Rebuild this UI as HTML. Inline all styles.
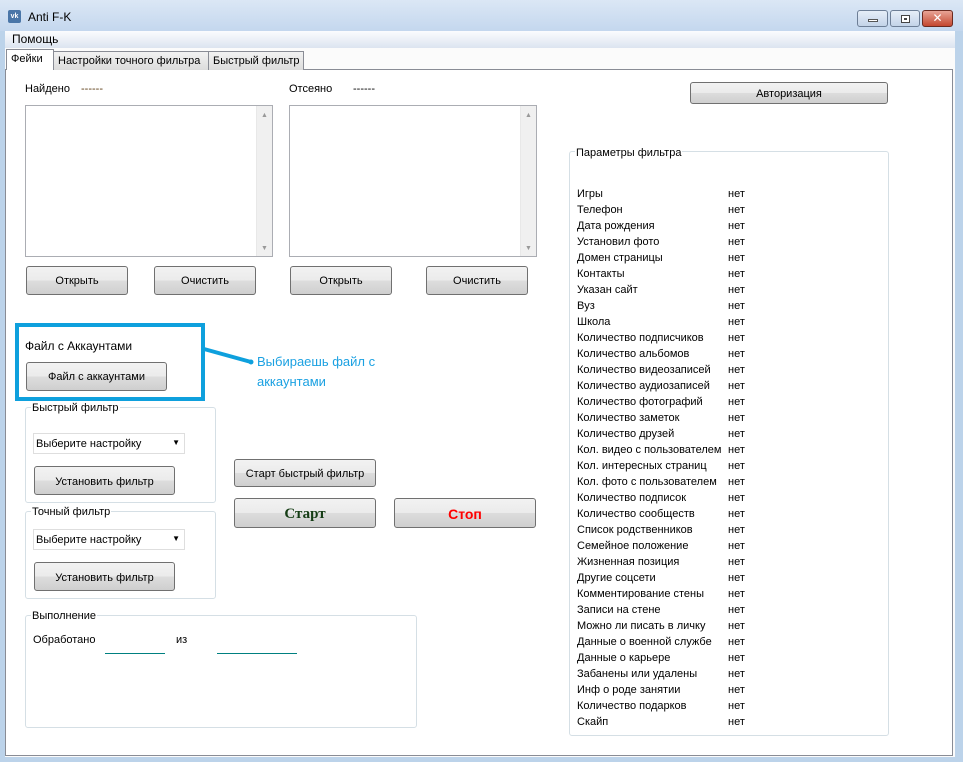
<!DOCTYPE html>
<html><head><meta charset="utf-8">
<style>
*{margin:0;padding:0;box-sizing:border-box}
body{width:963px;height:762px;overflow:hidden;background:#bcd3ea;font-family:"Liberation Sans","DejaVu Sans",sans-serif;font-size:11px;color:#000;position:relative}
.a{position:absolute;white-space:nowrap}
.title{left:0;top:0;width:963px;height:31px;background:linear-gradient(#dbe7f5,#c4d7ee)}
.client{left:5px;top:31px;width:950px;height:726px;background:#fbfbfb}
.menu{left:5px;top:31px;width:950px;height:17px;background:linear-gradient(#fbfcfe,#dce4f0)}
.page{left:5px;top:69px;width:948px;height:687px;background:#fff;border:1px solid #898c95}
.tab{top:51px;height:19px;border:1px solid #898c95;border-bottom:none;background:linear-gradient(#f2f2f2,#dcdcdc);padding:3px 4px 0;font-size:11px}
.btn{border:1px solid #707070;border-radius:3px;background:linear-gradient(#f2f2f2 0,#ebebeb 50%,#dddddd 50%,#cfcfcf 100%);text-align:center;font-size:11px}
.lb{border:1px solid #abadb3;background:#fff}
.sb{position:absolute;right:0;top:0;width:16px;height:100%;background:#f0f0f0;border-left:1px solid #e8e8e8}
.grp{border:1px solid #d5dfe5;border-radius:3px}
.gl{background:#fff;padding:0 1px}
.sel{border:1px solid #dedede;background:#fff;height:21px;padding:4px 2px;font-size:11px}
.wb{top:10px;height:17px;border:1px solid #6d7e96;border-radius:3px;background:linear-gradient(#e6eef8,#c3d3e8)}
.t{top:1px;position:relative}
</style></head><body>
<div class="a title"></div>
<div class="a" style="left:8px;top:10px;width:13px;height:13px;background:#4a76a8;border-radius:2px;color:#fff;font-size:7px;font-weight:bold;text-align:center;line-height:13px">vk</div>
<div class="a" style="left:28px;top:10px;font-size:12px">Anti F-K</div>
<div class="a wb" style="left:857px;width:31px"><div style="position:absolute;left:10px;top:8px;width:10px;height:3px;background:#fff;border:1px solid #555"></div></div>
<div class="a wb" style="left:890px;width:30px"><div style="position:absolute;left:10px;top:4px;width:9px;height:8px;border:1px solid #444;background:#fff"><div style="margin:2px;height:2px;background:#444"></div></div></div>
<div class="a wb" style="left:922px;width:31px;background:linear-gradient(#e8a496,#c4472f);border-color:#6b2a20;color:#fff;font-weight:bold;text-align:center;font-size:12px;line-height:15px">✕</div>
<div class="a client"></div>
<div class="a menu"></div>
<div class="a" style="left:12px;top:32px;font-size:12px">Помощь</div>
<div class="a page"></div>
<div class="a tab" style="left:53px;width:156px">Настройки точного фильтра</div>
<div class="a tab" style="left:208px;width:96px">Быстрый фильтр</div>
<div class="a tab" style="left:6px;top:49px;height:21px;width:48px;background:#fff">Фейки</div>

<div class="a" style="left:25px;top:83px">Найдено</div>
<div class="a" style="left:81px;top:83px;color:#5a3a10">------</div>
<div class="a" style="left:289px;top:83px">Отсеяно</div>
<div class="a" style="left:353px;top:83px">------</div>
<div class="a lb" style="left:25px;top:105px;width:248px;height:152px"><div class="sb"><div style="position:absolute;left:4px;top:6px;font-size:7px;color:#999">▲</div><div style="position:absolute;left:4px;bottom:4px;font-size:7px;color:#999">▼</div></div></div>
<div class="a lb" style="left:289px;top:105px;width:248px;height:152px"><div class="sb"><div style="position:absolute;left:4px;top:6px;font-size:7px;color:#999">▲</div><div style="position:absolute;left:4px;bottom:4px;font-size:7px;color:#999">▼</div></div></div>
<div class="a btn" style="left:26px;top:266px;width:102px;height:29px;line-height:29px">Открыть</div>
<div class="a btn" style="left:154px;top:266px;width:102px;height:29px;line-height:29px">Очистить</div>
<div class="a btn" style="left:290px;top:266px;width:102px;height:29px;line-height:29px">Открыть</div>
<div class="a btn" style="left:426px;top:266px;width:102px;height:29px;line-height:29px">Очистить</div>

<div class="a" style="left:15px;top:323px;width:190px;height:78px;border:4px solid #0ea0dd"></div>
<div class="a" style="left:25px;top:339px;font-size:12px">Файл с Аккаунтами</div>
<div class="a btn" style="left:26px;top:362px;width:141px;height:29px;line-height:29px">Файл с аккаунтами</div>
<svg class="a" style="left:200px;top:340px" width="60" height="30"><line x1="4" y1="9" x2="51" y2="22" stroke="#0ea0dd" stroke-width="4"/><circle cx="51" cy="22" r="2.5" fill="#0ea0dd"/></svg>
<div class="a" style="left:257px;top:352px;font-size:13px;color:#1ba1e2;line-height:20px">Выбираешь файл с<br>аккаунтами</div>

<div class="a grp" style="left:25px;top:407px;width:191px;height:96px"></div>
<div class="a gl" style="left:31px;top:402px">Быстрый фильтр</div>
<div class="a sel" style="left:33px;top:433px;width:152px">Выберите настройку<span style="position:absolute;right:4px;top:4px;font-size:8px">▼</span></div>
<div class="a btn" style="left:34px;top:466px;width:141px;height:29px;line-height:31px">Установить фильтр</div>
<div class="a grp" style="left:25px;top:511px;width:191px;height:88px"></div>
<div class="a gl" style="left:31px;top:506px">Точный фильтр</div>
<div class="a sel" style="left:33px;top:529px;width:152px">Выберите настройку<span style="position:absolute;right:4px;top:4px;font-size:8px">▼</span></div>
<div class="a btn" style="left:34px;top:562px;width:141px;height:29px;line-height:31px">Установить фильтр</div>

<div class="a btn" style="left:234px;top:459px;width:142px;height:28px;line-height:28px">Старт быстрый фильтр</div>
<div class="a btn" style="left:234px;top:498px;width:142px;height:30px;line-height:31px;font-family:'Liberation Serif',serif;font-weight:bold;font-size:15px;color:#153d15">Старт</div>
<div class="a btn" style="left:394px;top:498px;width:142px;height:30px;line-height:30px;font-weight:bold;font-size:14px;color:#f00">Стоп</div>

<div class="a grp" style="left:25px;top:615px;width:392px;height:113px"></div>
<div class="a gl" style="left:31px;top:610px">Выполнение</div>
<div class="a" style="left:33px;top:634px">Обработано</div>
<div class="a" style="left:105px;top:653px;width:60px;height:1px;background:#008080"></div>
<div class="a" style="left:176px;top:634px">из</div>
<div class="a" style="left:217px;top:653px;width:80px;height:1px;background:#008080"></div>

<div class="a btn" style="left:690px;top:82px;width:198px;height:22px;line-height:23px">Авторизация</div>
<div class="a grp" style="left:569px;top:151px;width:320px;height:585px"></div>
<div class="a gl" style="left:575px;top:147px">Параметры фильтра</div>
<div class="a" style="left:577px;top:186px;line-height:16px">Игры<br>Телефон<br>Дата рождения<br>Установил фото<br>Домен страницы<br>Контакты<br>Указан сайт<br>Вуз<br>Школа<br>Количество подписчиков<br>Количество альбомов<br>Количество видеозаписей<br>Количество аудиозаписей<br>Количество фотографий<br>Количество заметок<br>Количество друзей<br>Кол. видео с пользователем<br>Кол. интересных страниц<br>Кол. фото с пользователем<br>Количество подписок<br>Количество сообществ<br>Список родственников<br>Семейное положение<br>Жизненная позиция<br>Другие соцсети<br>Комментирование стены<br>Записи на стене<br>Можно ли писать в личку<br>Данные о военной службе<br>Данные о карьере<br>Забанены или удалены<br>Инф о роде занятии<br>Количество подарков<br>Скайп</div>
<div class="a" style="left:728px;top:186px;line-height:16px">нет<br>нет<br>нет<br>нет<br>нет<br>нет<br>нет<br>нет<br>нет<br>нет<br>нет<br>нет<br>нет<br>нет<br>нет<br>нет<br>нет<br>нет<br>нет<br>нет<br>нет<br>нет<br>нет<br>нет<br>нет<br>нет<br>нет<br>нет<br>нет<br>нет<br>нет<br>нет<br>нет<br>нет</div>
</body></html>
